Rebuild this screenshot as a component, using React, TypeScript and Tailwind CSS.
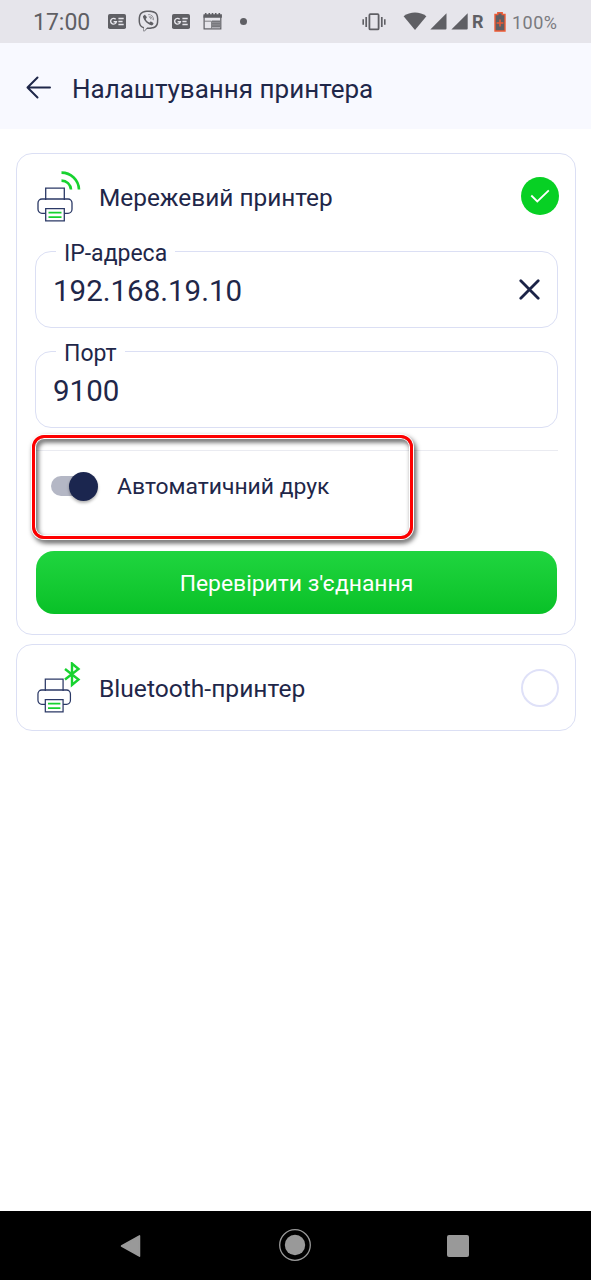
import React from "react";
import { FaViber } from "react-icons/fa";

type PrinterIconProps = {
  children: React.ReactNode;
  narrow?: boolean;
};

type FieldProps = {
  label: string;
  value: string;
  clearable?: boolean;
};

function NewsIcon() {
  return (
    <svg width="18" height="15" viewBox="0 0 18 15">
      <rect width="18" height="15" rx="1.8" fill="#5f5f64" />
      <path
        d="M7.700 5.300A2.900 2.900 0 1 0 8.400 7.700H5.600"
        fill="none"
        stroke="#e6e5eb"
        strokeWidth="1.400"
      />
      <path
        d="M10.400 4.500h5.300M10.400 7.500h4.200M10.400 10.500h5.300"
        stroke="#e6e5eb"
        strokeWidth="1.400"
      />
    </svg>
  );
}

function CalendarIcon() {
  return (
    <svg width="19" height="17" viewBox="0 0 19 17">
      <path d="M.5 1.200h1.400V0h1.600v1.200h2V0h1.600v1.200h1.600V0h1.600v1.200h1.600V0h1.600v1.200h2V0h1.600v1.200h1.800v3.600H.5z" fill="#5f5f64" />
      <rect x="1.100" y="3" width="16.700" height="12.900" fill="none" stroke="#5f5f64" strokeWidth="1.200" />
      <path d="M1 8.200h7.500M8.500 15.500V8.200" stroke="#77777c" strokeWidth=".9" />
      <path d="M9 7.500h8v7H9z" fill="#77777c" />
      <path d="M9 9.600h8M9 11.900h8" stroke="#a5a5aa" strokeWidth=".6" />
    </svg>
  );
}

function StatusBar() {
  return (
    <div className="flex h-[43px] shrink-0 items-center bg-[#e6e5eb] pl-[33px] text-[#5f5f64]">
      <span className="w-[75px] pt-[2px] text-[23px] leading-none">17:00</span>
      <NewsIcon />
      <FaViber className="mb-[1px] ml-[12px] h-[22px] w-[21px]" />
      <span className="ml-[13px]">
        <NewsIcon />
      </span>
      <span className="ml-[13px]">
        <CalendarIcon />
      </span>
      <span className="ml-[18px] h-[7px] w-[7px] rounded-full bg-[#5f5f64]" />

      <svg className="ml-[115px]" width="24" height="18" viewBox="0 0 24 18" fill="none" stroke="#5f5f64">
        <rect x="7.400" y="1.200" width="9.200" height="15.200" rx="1" strokeWidth="1.800" />
        <path d="M4.200 4v10M19.800 4v10" strokeWidth="1.700" />
        <path d="M1.200 6.200v5.600M22.800 6.200v5.600" strokeWidth="1.600" />
      </svg>
      <svg className="ml-[17px]" width="24" height="19" viewBox="0 0 24 19" fill="#5f5f64">
        <path d="M.6 4.200C7.200-.6 16.800-.6 23.400 4.200L12 18z" />
      </svg>
      <svg className="mb-[1px] ml-[3px]" width="38" height="17" viewBox="0 0 38 17" fill="#5f5f64">
        <path d="M16.500.3v15.200a1 1 0 0 1-1 1H.3z" />
        <path d="M37.700.3v15.200a1 1 0 0 1-1 1H21.400z" />
      </svg>
      <span className="ml-[4px] w-[22px] pt-[1px] text-[18px] font-bold leading-none">R</span>
      <svg width="12" height="20" viewBox="0 0 12 20">
        <path d="M3.800 2.500V.800h4.400v1.700H11v16.500H1V2.500z" fill="#5f5f64" stroke="#ee5b35" strokeWidth="1.400" />
        <path d="M6 7.500v7M2.600 11h6.800" stroke="#ee5b35" strokeWidth="1.500" />
      </svg>
      <span className="ml-[6px] pt-[2px] text-[18px] leading-none tracking-[0.5px] text-[#7a7a7f]">
        100%
      </span>
    </div>
  );
}

function PrinterIcon({ children, narrow }: PrinterIconProps) {
  return (
    <svg width="44" height="52" viewBox="0 0 44 52" fill="none">
      <g stroke="#2b3966" strokeWidth="1.300" transform={narrow ? "scale(.955 1)" : undefined}>
        <path d="M8.700 29V17.200h18.600V29" />
        <path d="M8.700 42.300H5a4 4 0 0 1-4-4V32a4 4 0 0 1 4-4h26a4 4 0 0 1 4 4v6.300a4 4 0 0 1-4 4h-3.700" />
        <path d="M8.700 37.600h18.600v12.200H8.700z" />
        <path d="M11.500 41.600h13M11.500 46.200h13" stroke="#17d22f" strokeWidth="1.800" />
      </g>
      <g stroke="#17d22f">{children}</g>
    </svg>
  );
}

function Field({ label, value, clearable }: FieldProps) {
  return (
    <div className="relative flex h-[77px] items-center justify-between rounded-[16px] border border-[#dbdff4] pl-[17px] pr-[17px]">
      <span className="absolute -top-[11px] left-[20px] bg-white px-[8px] text-[23px] leading-[26px]">
        {label}
      </span>
      <span className="pt-[5px] text-[29.500px] leading-none">{value}</span>
      {clearable && (
        <svg width="21" height="21" viewBox="0 0 21 21">
          <path d="M1.800 1.800l17.400 17.400M19.200 1.800L1.800 19.200" stroke="#1b2347" strokeWidth="2.800" strokeLinecap="round" />
        </svg>
      )}
    </div>
  );
}

function NavigationBar() {
  return (
    <div className="flex h-[69px] shrink-0 items-center justify-between bg-black pl-[120px] pr-[122px]">
      <svg width="21" height="24" viewBox="0 0 21 24">
        <path d="M1.500 12L19.500 1.800v20.400z" fill="#999" stroke="#999" strokeWidth="1.500" strokeLinejoin="round" />
      </svg>
      <svg className="mb-[2px] ml-[1px]" width="32" height="32" viewBox="0 0 32 32">
        <circle cx="16" cy="16" r="15.300" fill="none" stroke="#999" strokeWidth="1.300" />
        <circle cx="16" cy="16" r="10.200" fill="#999" />
      </svg>
      <span className="h-[22px] w-[22px] rounded-[2px] bg-[#999]" />
    </div>
  );
}

export default function App() {
  return (
    <div className="flex h-[1280px] w-[591px] flex-col overflow-hidden bg-white font-[Roboto,sans-serif] text-[#1f2749]">
      <StatusBar />

      <header className="flex h-[86px] shrink-0 items-center bg-[#f8f9ff] pl-[26px] pt-[3px]">
        <svg width="26" height="23" viewBox="0 0 26 23" fill="none" stroke="#1f2749" strokeWidth="2" strokeLinecap="round" strokeLinejoin="round">
          <path d="M24 11.500H1.500M11.500 1.500l-10 10 10 10" />
        </svg>
        <h1 className="ml-[20px] pt-[2px] text-[26px] leading-none">Налаштування принтера</h1>
      </header>

      <main className="flex flex-1 flex-col gap-[9px] pl-[16px] pr-[15px] pt-[24px]">
        <section className="h-[482px] rounded-[16px] border border-[#dbdff4] pl-[18px] pr-[17px]">
          <div className="flex h-[97px] items-start pt-[17px]">
            <div className="ml-[2px]">
              <PrinterIcon>
                <path d="M24.500 1.600A17.500 17.500 0 0 1 42 18.500M24.500 9.600A9.500 9.500 0 0 1 34 18.500" strokeWidth="2.600" />
              </PrinterIcon>
            </div>
            <h2 className="ml-[18px] pt-[15px] text-[24.400px] leading-none">Мережевий принтер</h2>
            <span className="-mr-[1px] ml-auto mt-[6px] flex h-[38px] w-[38px] items-center justify-center rounded-full bg-[#07d024]">
              <svg className="mb-[1px]" width="20" height="14" viewBox="0 0 20 14" fill="none" stroke="#fff" strokeWidth="1.800">
                <path d="M1.300 6.500l6 6L18.800 1.300" />
              </svg>
            </span>
          </div>

          <div className="flex flex-col gap-[23px]">
            <Field label="IP-адреса" value="192.168.19.10" clearable />
            <Field label="Порт" value="9100" />
          </div>

          <div className="relative mt-[22px] flex h-[101px] items-start border-t border-[#eaebf1] pl-[16px] pt-[21px]">
            <span className="relative mt-[4px] h-[20px] w-[40px] rounded-full bg-[#b4b7c5]">
              <span className="absolute -top-[4px] left-[18px] h-[29px] w-[29px] rounded-full bg-[#1b264f] shadow-[0_2px_3px_rgba(0,0,0,0.3)]" />
            </span>
            <span className="ml-[26px] pt-[4px] text-[22.900px] leading-none">Автоматичний друк</span>
            <span className="absolute -left-[3px] -top-[16px] h-[104px] w-[381px] rounded-[12px] border-3 border-[#fe0000] shadow-[0_0_0_1px_#fff,inset_0_0_0_1px_#fff] drop-shadow-[2px_3px_2.500px_rgba(0,0,0,0.7)]" />
          </div>

          <button className="ml-[1px] flex h-[63px] w-[521px] items-center justify-center rounded-[18px] bg-linear-to-b from-[#1fd53f] to-[#08c127] pt-[4px] text-[22.900px] text-white">
            Перевірити з'єднання
          </button>
        </section>

        <section className="flex h-[87px] items-center rounded-[16px] border border-[#dbdff4] pl-[20px] pr-[16px]">
          <PrinterIcon narrow>
            <path d="M28 7l13.500 10.500-6.500 5.500V1.500l6.500 5.500L28 17.500" strokeWidth="2.400" />
          </PrinterIcon>
          <h2 className="ml-[18px] pt-[3px] text-[24.600px] leading-none">Bluetooth-принтер</h2>
          <span className="ml-auto h-[38px] w-[38px] rounded-full border-2 border-[#dfe1f8]" />
        </section>
      </main>

      <NavigationBar />
    </div>
  );
}
